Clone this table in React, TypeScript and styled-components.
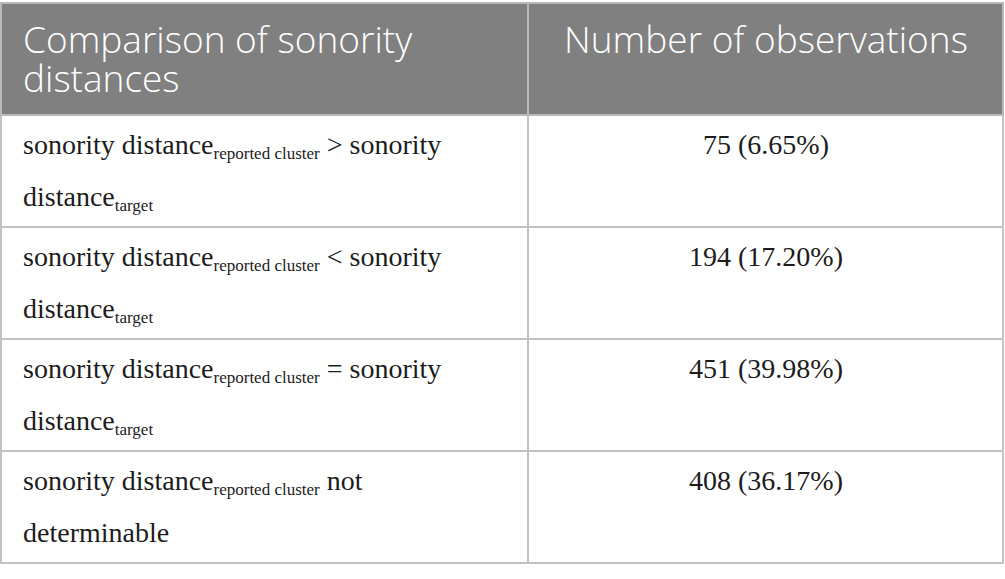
import React from 'react';
import styled, { createGlobalStyle } from 'styled-components';

const GlobalStyle = createGlobalStyle`
  body {
    margin: 0;
    background: #ffffff;
  }
`;

type Row = {
  before: string;
  after: string;
  target: boolean;
  count: string;
};

const rows: Row[] = [
  { before: 'sonority distance', after: ' > sonority distance', target: true, count: '75 (6.65%)' },
  { before: 'sonority distance', after: ' < sonority distance', target: true, count: '194 (17.20%)' },
  { before: 'sonority distance', after: ' = sonority distance', target: true, count: '451 (39.98%)' },
  { before: 'sonority distance', after: ' not determinable', target: false, count: '408 (36.17%)' },
];

const App: React.FC = () => {
  return (
    <React.Fragment>
      <GlobalStyle />
      <Wrapper>
        <Table>
          <colgroup>
            <col style={{ width: 527 }} />
            <col />
          </colgroup>
          <thead>
            <tr>
              <HeadCell>Comparison of sonority distances</HeadCell>
              <HeadCell center>Number of observations</HeadCell>
            </tr>
          </thead>
          <tbody>
            {rows.map((row) => (
              <tr key={row.count}>
                <Cell>
                  {row.before}
                  <Sub>reported cluster</Sub>
                  {row.after}
                  {row.target && <Sub>target</Sub>}
                </Cell>
                <Cell center>{row.count}</Cell>
              </tr>
            ))}
          </tbody>
        </Table>
      </Wrapper>
    </React.Fragment>
  );
};

const Wrapper = styled.div`
  padding-top: 2px;
  width: 1004px;
`;

const Table = styled.table`
  width: 100%;
  border-collapse: collapse;
  table-layout: fixed;
  border: 2px solid #c2c2c2;
`;

const HeadCell = styled.th<{ center?: boolean }>`
  background: #7f807f;
  color: #ffffff;
  font-family: 'Open Sans', 'Noto Sans', sans-serif;
  font-weight: 300;
  font-size: 37px;
  line-height: 39px;
  text-align: ${(p) => (p.center ? 'center' : 'left')};
  vertical-align: top;
  padding: 15px 20px 10px 21px;
  height: 112px;
  box-sizing: border-box;
  border: 2px solid #b9b9b9;
`;

const Cell = styled.td<{ center?: boolean }>`
  font-family: 'Liberation Serif', 'Times New Roman', serif;
  font-size: 28px;
  line-height: 52px;
  color: #1c1c1c;
  text-align: ${(p) => (p.center ? 'center' : 'left')};
  vertical-align: top;
  padding: 3px 20px 3px 21px;
  height: 108px;
  box-sizing: border-box;
  border: 2px solid #c2c2c2;
`;

const Sub = styled.sub`
  font-size: 17px;
  line-height: 0;
  vertical-align: -5px;
`;

export default App;
